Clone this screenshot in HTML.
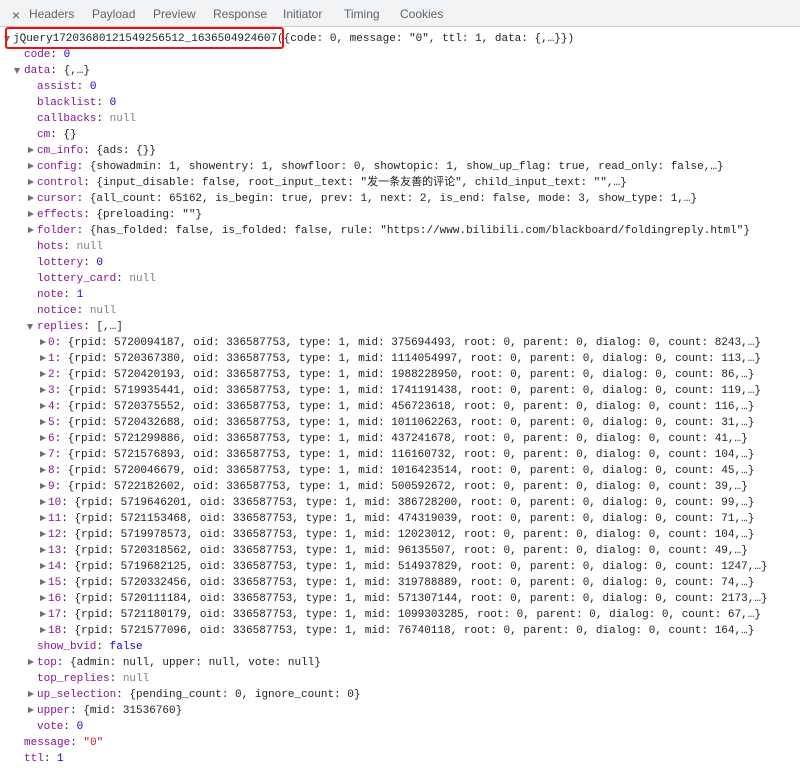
<!DOCTYPE html>
<html><head><meta charset="utf-8"><style>
body{margin:0;width:800px;height:768px;background:#fff;overflow:hidden;position:relative}
.tabs{position:absolute;left:0;top:0;width:800px;height:26px;background:#f1f3f4;border-bottom:1px solid #cacdd1;font:12px "Liberation Sans","DejaVu Sans",sans-serif;color:#5f6368}
.tabs span{position:absolute;top:7px}
.c{position:absolute;left:0;top:31px;font:11px/16px "Liberation Mono","Noto Sans CJK SC",monospace;color:#222}
.l{position:relative;height:16px;white-space:pre}
.k{color:#881391}.n{color:#1c00cf}.s{color:#c41a16}.g{color:#808080}
.a{position:absolute;width:0;height:0;top:5px;border-left:3.5px solid transparent;border-right:3.5px solid transparent;border-top:6px solid #6e6e6e}
.r{position:absolute;width:0;height:0;top:4px;border-top:3.5px solid transparent;border-bottom:3.5px solid transparent;border-left:6px solid #6e6e6e}
.box{position:absolute;left:5px;top:27px;width:275px;height:18px;border:2px solid #f01010;border-radius:3px}
</style></head><body>
<div class="tabs"><span style="left:12px;font-size:14px;color:#555">×</span><span style="left:29px">Headers</span><span style="left:92px">Payload</span><span style="left:153px">Preview</span><span style="left:213px">Response</span><span style="left:283px">Initiator</span><span style="left:344px">Timing</span><span style="left:400px">Cookies</span></div>
<div class="c">
<div class="l"><i class="a" style="left:4px"></i><span style="position:absolute;left:13px">jQuery17203680121549256512_1636504924607({code: 0, message: "0", ttl: 1, data: {,…}})</span></div>
<div class="l"><span style="position:absolute;left:24px"><span class="k">code</span>: <span class="n">0</span></span></div>
<div class="l"><i class="a" style="left:14px"></i><span style="position:absolute;left:24px"><span class="k">data</span>: {,…}</span></div>
<div class="l"><span style="position:absolute;left:37px"><span class="k">assist</span>: <span class="n">0</span></span></div>
<div class="l"><span style="position:absolute;left:37px"><span class="k">blacklist</span>: <span class="n">0</span></span></div>
<div class="l"><span style="position:absolute;left:37px"><span class="k">callbacks</span>: <span class="g">null</span></span></div>
<div class="l"><span style="position:absolute;left:37px"><span class="k">cm</span>: {}</span></div>
<div class="l"><i class="r" style="left:28px"></i><span style="position:absolute;left:37px"><span class="k">cm_info</span>: {ads: {}}</span></div>
<div class="l"><i class="r" style="left:28px"></i><span style="position:absolute;left:37px"><span class="k">config</span>: {showadmin: 1, showentry: 1, showfloor: 0, showtopic: 1, show_up_flag: true, read_only: false,…}</span></div>
<div class="l"><i class="r" style="left:28px"></i><span style="position:absolute;left:37px"><span class="k">control</span>: {input_disable: false, root_input_text: "发一条友善的评论", child_input_text: "",…}</span></div>
<div class="l"><i class="r" style="left:28px"></i><span style="position:absolute;left:37px"><span class="k">cursor</span>: {all_count: 65162, is_begin: true, prev: 1, next: 2, is_end: false, mode: 3, show_type: 1,…}</span></div>
<div class="l"><i class="r" style="left:28px"></i><span style="position:absolute;left:37px"><span class="k">effects</span>: {preloading: ""}</span></div>
<div class="l"><i class="r" style="left:28px"></i><span style="position:absolute;left:37px"><span class="k">folder</span>: {has_folded: false, is_folded: false, rule: "https://www.bilibili.com/blackboard/foldingreply.html"}</span></div>
<div class="l"><span style="position:absolute;left:37px"><span class="k">hots</span>: <span class="g">null</span></span></div>
<div class="l"><span style="position:absolute;left:37px"><span class="k">lottery</span>: <span class="n">0</span></span></div>
<div class="l"><span style="position:absolute;left:37px"><span class="k">lottery_card</span>: <span class="g">null</span></span></div>
<div class="l"><span style="position:absolute;left:37px"><span class="k">note</span>: <span class="n">1</span></span></div>
<div class="l"><span style="position:absolute;left:37px"><span class="k">notice</span>: <span class="g">null</span></span></div>
<div class="l"><i class="a" style="left:27px"></i><span style="position:absolute;left:37px"><span class="k">replies</span>: [,…]</span></div>
<div class="l"><i class="r" style="left:40px"></i><span style="position:absolute;left:48px"><span class="k">0</span>: {rpid: 5720094187, oid: 336587753, type: 1, mid: 375694493, root: 0, parent: 0, dialog: 0, count: 8243,…}</span></div>
<div class="l"><i class="r" style="left:40px"></i><span style="position:absolute;left:48px"><span class="k">1</span>: {rpid: 5720367380, oid: 336587753, type: 1, mid: 1114054997, root: 0, parent: 0, dialog: 0, count: 113,…}</span></div>
<div class="l"><i class="r" style="left:40px"></i><span style="position:absolute;left:48px"><span class="k">2</span>: {rpid: 5720420193, oid: 336587753, type: 1, mid: 1988228950, root: 0, parent: 0, dialog: 0, count: 86,…}</span></div>
<div class="l"><i class="r" style="left:40px"></i><span style="position:absolute;left:48px"><span class="k">3</span>: {rpid: 5719935441, oid: 336587753, type: 1, mid: 1741191438, root: 0, parent: 0, dialog: 0, count: 119,…}</span></div>
<div class="l"><i class="r" style="left:40px"></i><span style="position:absolute;left:48px"><span class="k">4</span>: {rpid: 5720375552, oid: 336587753, type: 1, mid: 456723618, root: 0, parent: 0, dialog: 0, count: 116,…}</span></div>
<div class="l"><i class="r" style="left:40px"></i><span style="position:absolute;left:48px"><span class="k">5</span>: {rpid: 5720432688, oid: 336587753, type: 1, mid: 1011062263, root: 0, parent: 0, dialog: 0, count: 31,…}</span></div>
<div class="l"><i class="r" style="left:40px"></i><span style="position:absolute;left:48px"><span class="k">6</span>: {rpid: 5721299886, oid: 336587753, type: 1, mid: 437241678, root: 0, parent: 0, dialog: 0, count: 41,…}</span></div>
<div class="l"><i class="r" style="left:40px"></i><span style="position:absolute;left:48px"><span class="k">7</span>: {rpid: 5721576893, oid: 336587753, type: 1, mid: 116160732, root: 0, parent: 0, dialog: 0, count: 104,…}</span></div>
<div class="l"><i class="r" style="left:40px"></i><span style="position:absolute;left:48px"><span class="k">8</span>: {rpid: 5720046679, oid: 336587753, type: 1, mid: 1016423514, root: 0, parent: 0, dialog: 0, count: 45,…}</span></div>
<div class="l"><i class="r" style="left:40px"></i><span style="position:absolute;left:48px"><span class="k">9</span>: {rpid: 5722182602, oid: 336587753, type: 1, mid: 500592672, root: 0, parent: 0, dialog: 0, count: 39,…}</span></div>
<div class="l"><i class="r" style="left:40px"></i><span style="position:absolute;left:48px"><span class="k">10</span>: {rpid: 5719646201, oid: 336587753, type: 1, mid: 386728200, root: 0, parent: 0, dialog: 0, count: 99,…}</span></div>
<div class="l"><i class="r" style="left:40px"></i><span style="position:absolute;left:48px"><span class="k">11</span>: {rpid: 5721153468, oid: 336587753, type: 1, mid: 474319039, root: 0, parent: 0, dialog: 0, count: 71,…}</span></div>
<div class="l"><i class="r" style="left:40px"></i><span style="position:absolute;left:48px"><span class="k">12</span>: {rpid: 5719978573, oid: 336587753, type: 1, mid: 12023012, root: 0, parent: 0, dialog: 0, count: 104,…}</span></div>
<div class="l"><i class="r" style="left:40px"></i><span style="position:absolute;left:48px"><span class="k">13</span>: {rpid: 5720318562, oid: 336587753, type: 1, mid: 96135507, root: 0, parent: 0, dialog: 0, count: 49,…}</span></div>
<div class="l"><i class="r" style="left:40px"></i><span style="position:absolute;left:48px"><span class="k">14</span>: {rpid: 5719682125, oid: 336587753, type: 1, mid: 514937829, root: 0, parent: 0, dialog: 0, count: 1247,…}</span></div>
<div class="l"><i class="r" style="left:40px"></i><span style="position:absolute;left:48px"><span class="k">15</span>: {rpid: 5720332456, oid: 336587753, type: 1, mid: 319788889, root: 0, parent: 0, dialog: 0, count: 74,…}</span></div>
<div class="l"><i class="r" style="left:40px"></i><span style="position:absolute;left:48px"><span class="k">16</span>: {rpid: 5720111184, oid: 336587753, type: 1, mid: 571307144, root: 0, parent: 0, dialog: 0, count: 2173,…}</span></div>
<div class="l"><i class="r" style="left:40px"></i><span style="position:absolute;left:48px"><span class="k">17</span>: {rpid: 5721180179, oid: 336587753, type: 1, mid: 1099303285, root: 0, parent: 0, dialog: 0, count: 67,…}</span></div>
<div class="l"><i class="r" style="left:40px"></i><span style="position:absolute;left:48px"><span class="k">18</span>: {rpid: 5721577096, oid: 336587753, type: 1, mid: 76740118, root: 0, parent: 0, dialog: 0, count: 164,…}</span></div>
<div class="l"><span style="position:absolute;left:37px"><span class="k">show_bvid</span>: <span class="n">false</span></span></div>
<div class="l"><i class="r" style="left:28px"></i><span style="position:absolute;left:37px"><span class="k">top</span>: {admin: null, upper: null, vote: null}</span></div>
<div class="l"><span style="position:absolute;left:37px"><span class="k">top_replies</span>: <span class="g">null</span></span></div>
<div class="l"><i class="r" style="left:28px"></i><span style="position:absolute;left:37px"><span class="k">up_selection</span>: {pending_count: 0, ignore_count: 0}</span></div>
<div class="l"><i class="r" style="left:28px"></i><span style="position:absolute;left:37px"><span class="k">upper</span>: {mid: 31536760}</span></div>
<div class="l"><span style="position:absolute;left:37px"><span class="k">vote</span>: <span class="n">0</span></span></div>
<div class="l"><span style="position:absolute;left:24px"><span class="k">message</span>: <span class="s">"0"</span></span></div>
<div class="l"><span style="position:absolute;left:24px"><span class="k">ttl</span>: <span class="n">1</span></span></div>
</div>
<div class="box"></div>
</body></html>
